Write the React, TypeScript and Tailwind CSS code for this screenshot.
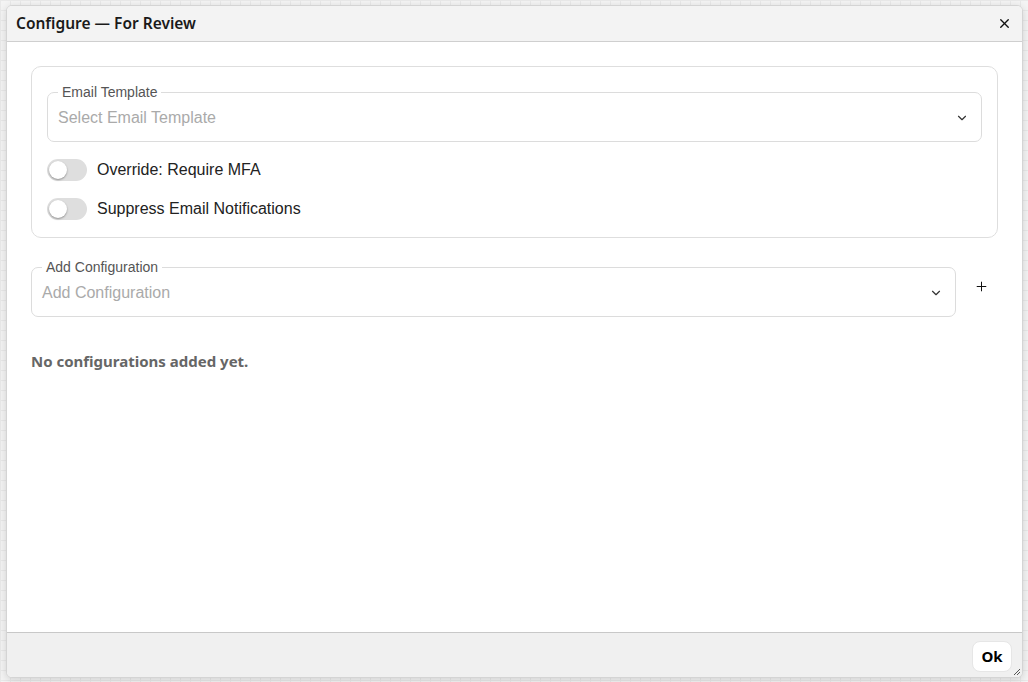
import React, { useState } from 'react';
import { ChevronDown, Plus, X } from 'lucide-react';

function Toggle({ label, checked, onChange }: { label: string; checked: boolean; onChange: () => void }) {
  return (
    <label className="flex h-[22px] items-center gap-[10px] cursor-pointer select-none">
      <button
        type="button"
        onClick={onChange}
        className={`relative h-[22px] w-[40px] rounded-full transition-colors ${checked ? 'bg-[#3b82f6]' : 'bg-[#dedede]'}`}
      >
        <span
          className={`absolute top-[2px] h-[18px] w-[18px] rounded-full bg-white shadow-[0_1px_2px_rgba(0,0,0,0.35)] transition-all ${checked ? 'left-[20px]' : 'left-[2px]'}`}
        />
      </button>
      <span className="text-[16px] leading-[22px] text-[#222]">{label}</span>
    </label>
  );
}

function SelectField({ legend, placeholder }: { legend: string; placeholder: string }) {
  return (
    <fieldset className="min-w-0 flex-1 rounded-[7px] border border-[#dcdcdc] px-[10px] pb-[7px]">
      <legend className="px-[4px] text-[14px] leading-[16px] text-[#555]">{legend}</legend>
      <div className="flex h-[34px] items-center justify-between pt-[1px]">
        <span className="text-[16px] text-[#aaa]">{placeholder}</span>
        <ChevronDown className="mr-[2px] h-[14px] w-[14px] text-[#333]" strokeWidth={2} />
      </div>
    </fieldset>
  );
}

export default function App() {
  const [mfa, setMfa] = useState(false);
  const [suppress, setSuppress] = useState(false);

  return (
    <div className="h-[682px] w-full overflow-hidden bg-[#f4f4f4] bg-[linear-gradient(to_right,#e9e9e9_1px,transparent_1px),linear-gradient(to_bottom,#e9e9e9_1px,transparent_1px)] bg-[size:10px_10px] pl-[6px] pr-[5px] pt-[5px] pb-[4px] font-['Liberation_Sans',Arial,sans-serif]">
      <div className="flex h-full flex-col overflow-hidden rounded-[6px] border border-[#d4d4d4] bg-white shadow-[0_2px_8px_rgba(0,0,0,0.15)]">
        <div className="flex h-[36px] shrink-0 items-center justify-between border-b border-[#cfcfcf] bg-[#f3f3f3] pl-[9px] pr-[10px]">
          <h2 className="font-['Noto_Sans',sans-serif] text-[15.5px] font-semibold text-[#1a1a1a]">Configure — For Review</h2>
          <button className="flex h-[15px] w-[15px] items-center justify-center text-[#111]">
            <X className="h-[15px] w-[15px]" strokeWidth={2.2} />
          </button>
        </div>

        <div className="flex-1 px-6 pt-6">
          <div className="rounded-[10px] border border-[#dedede] px-[15px] pt-[17px] pb-[17px]">
            <SelectField legend="Email Template" placeholder="Select Email Template" />
            <div className="mt-[17px] flex flex-col gap-[17px]">
              <Toggle label="Override: Require MFA" checked={mfa} onChange={() => setMfa(!mfa)} />
              <Toggle label="Suppress Email Notifications" checked={suppress} onChange={() => setSuppress(!suppress)} />
            </div>
          </div>

          <div className="mt-[21px] flex items-center gap-2">
            <SelectField legend="Add Configuration" placeholder="Add Configuration" />
            <button className="mb-[4px] flex h-[34px] w-[34px] items-center justify-center text-[#111]">
              <Plus className="h-[15px] w-[15px]" strokeWidth={1.6} />
            </button>
          </div>

          <p className="mt-[34px] font-['Noto_Sans',sans-serif] text-[15px] font-bold leading-[20px] text-[#666]">No configurations added yet.</p>
        </div>

        <div className="relative flex h-[45px] shrink-0 items-center justify-end border-t border-[#c8c8c8] bg-[#f0f0f0] pr-[10px]">
          <button className="mt-[2px] h-[31px] w-[40px] rounded-[8px] border border-[#e6e6e6] bg-white font-['Noto_Sans',sans-serif] text-[15px] font-bold text-black">
            Ok
          </button>
          <svg className="absolute bottom-[1px] right-[1px]" width="9" height="9" viewBox="0 0 9 9">
            <path d="M8 2 L2 8 M8 5 L5 8" stroke="#555" strokeWidth="1" />
          </svg>
        </div>
      </div>
    </div>
  );
}
